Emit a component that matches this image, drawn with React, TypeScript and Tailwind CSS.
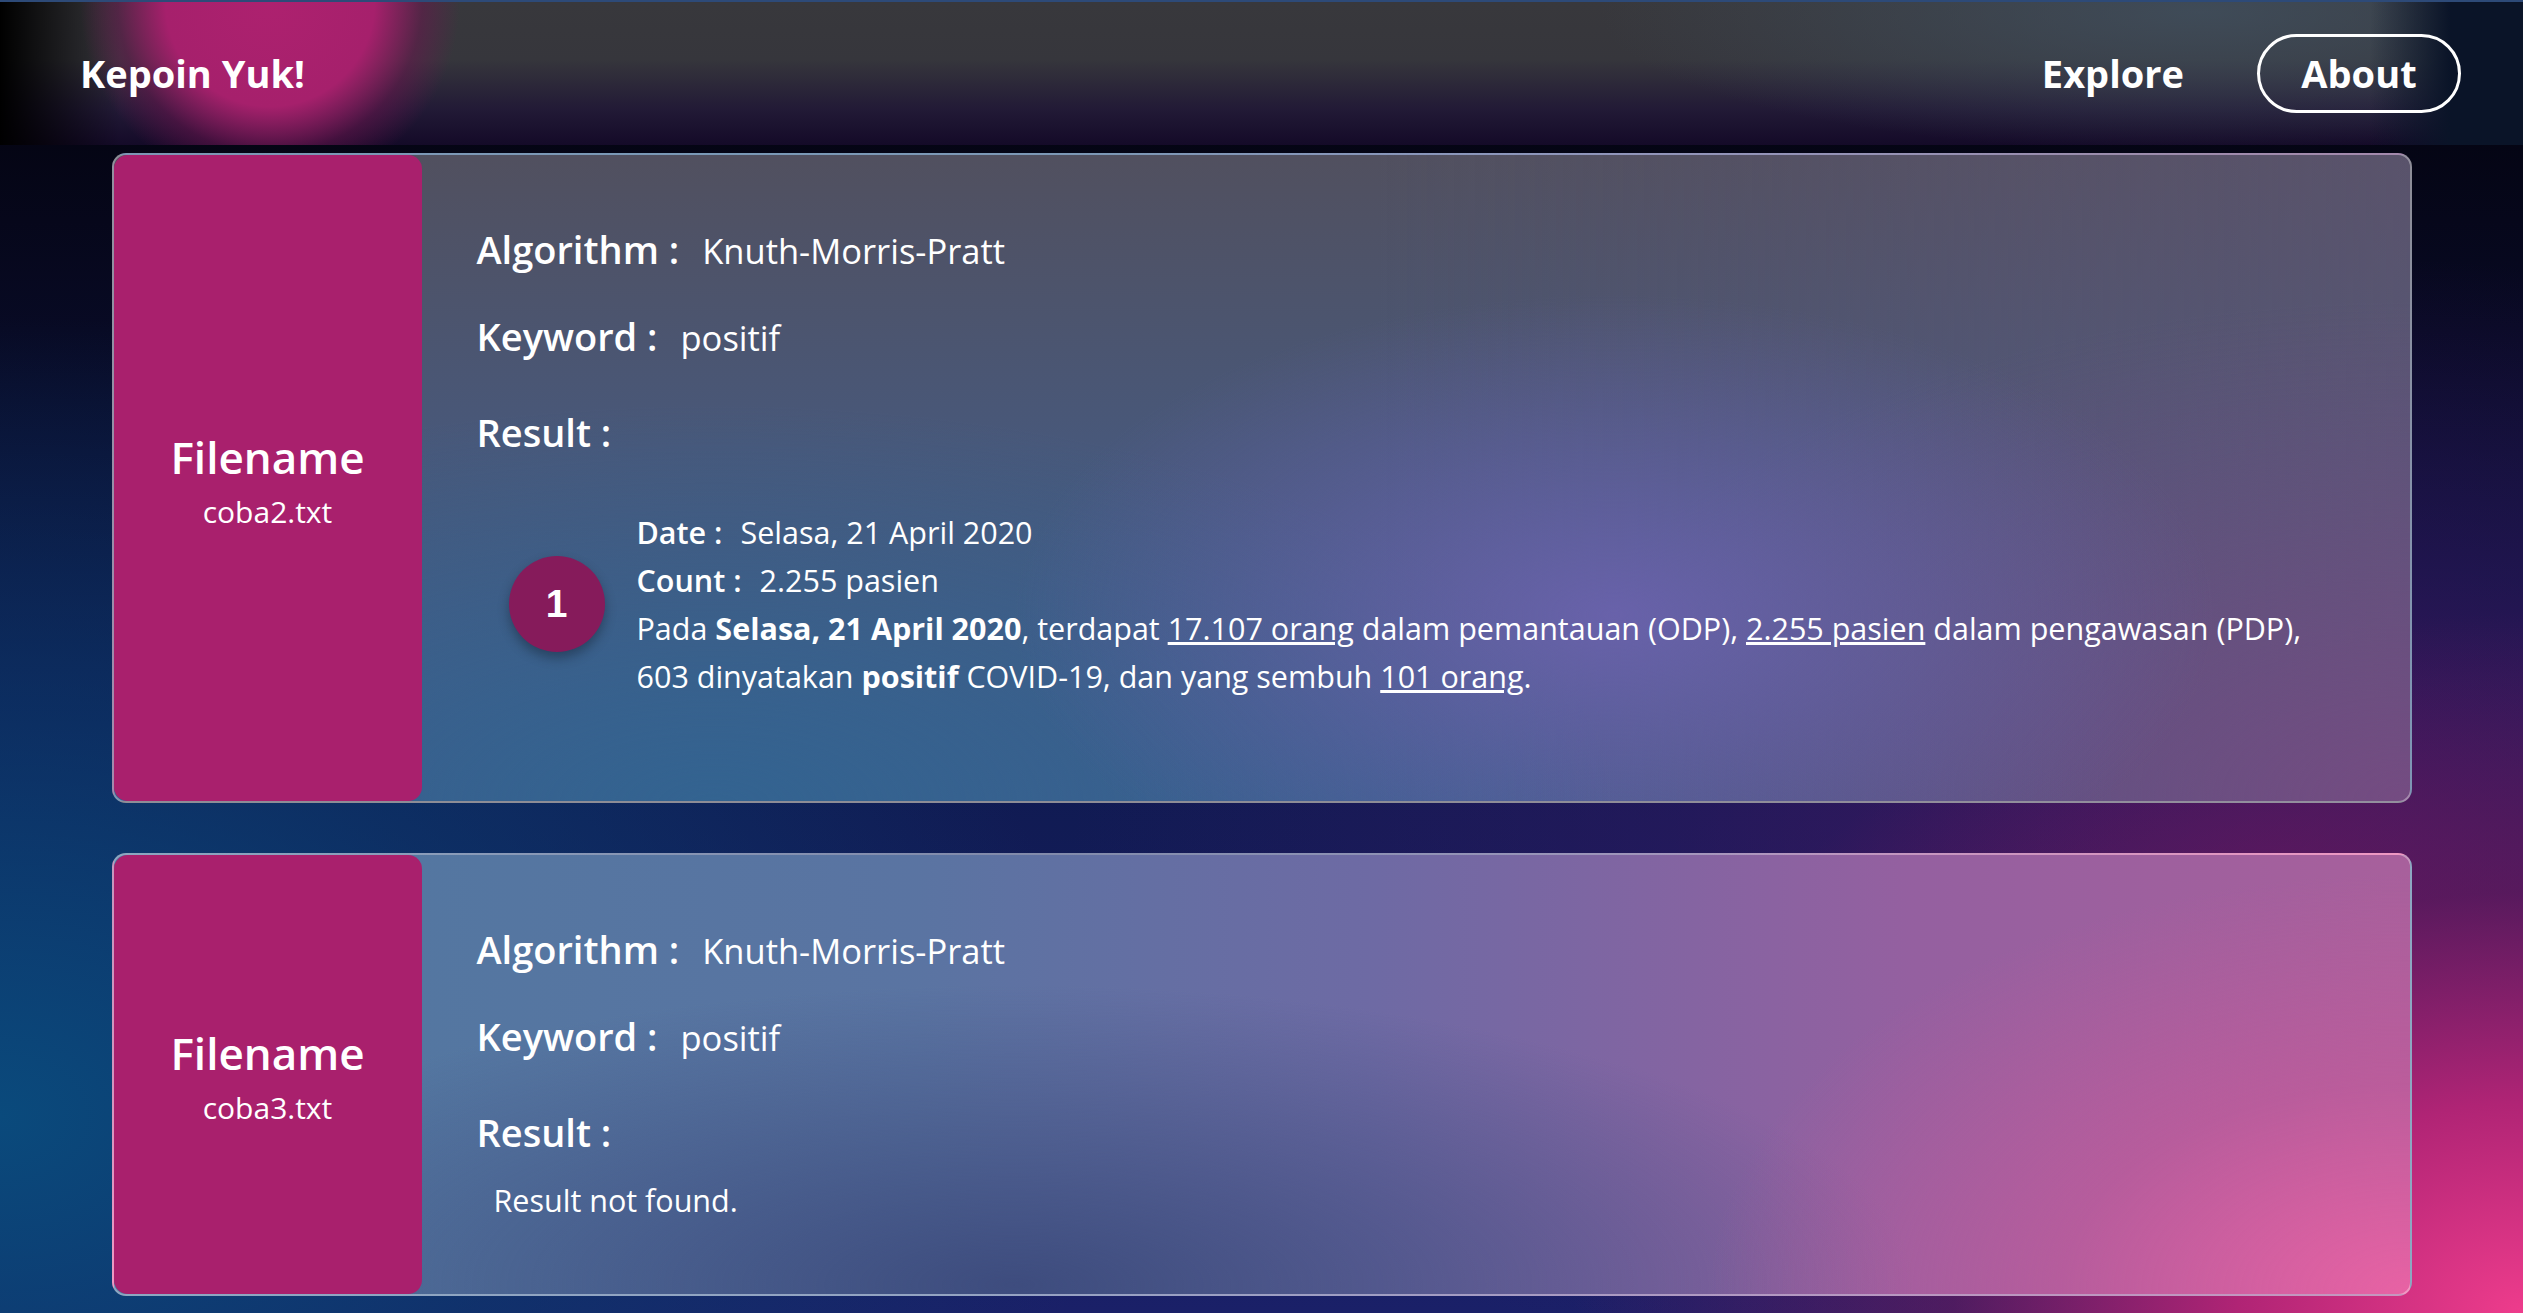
import React from "react";

function Row({ label, value, className = "" }: { label: string; value: string; className?: string }) {
  return (
    <div className={"h-[56px] leading-[56px] text-[38px] whitespace-nowrap " + className}>
      <span className="font-semibold">{label}</span>
      <span className="ml-[23px] text-[34.5px] font-normal">{value}</span>
    </div>
  );
}

function FilePanel({ name }: { name: string }) {
  return (
    <div className="w-[308px] shrink-0 rounded-[14px] bg-[#a9206d] flex flex-col items-center justify-center pt-[8px]">
      <div className="text-[44px] font-semibold leading-[53px]">Filename</div>
      <div className="text-[30px] leading-[45px] mt-[5px]">{name}</div>
    </div>
  );
}

export default function App() {
  return (
    <div className="min-h-screen w-full border-t-2 border-[#2d4a78] text-white font-['Open_Sans',sans-serif] bg-[radial-gradient(ellipse_950px_700px_at_100%_100%,#ee3c8c_0%,#b02475_30%,rgba(110,26,92,0.6)_60%,transparent_100%),radial-gradient(ellipse_1100px_800px_at_0%_85%,#0a4a7c_0%,rgba(10,60,110,0.6)_50%,transparent_100%),radial-gradient(ellipse_1200px_600px_at_90%_65%,rgba(85,22,100,0.75)_0%,rgba(60,22,100,0.4)_50%,transparent_100%),linear-gradient(to_bottom,#020108_0%,#080a24_25%,#0f1a50_55%,#1a2068_100%)]">
      <header className="h-[143px] flex items-center justify-between pl-[80px] pr-[62px] bg-[radial-gradient(ellipse_190px_190px_at_270px_0px,#ad216f_0%,#a6206c_55%,rgba(110,20,80,0.5)_80%,transparent_100%),linear-gradient(to_right,#000_0px,rgba(0,0,0,0)_120px,rgba(0,0,0,0)_2370px,#0a1428_2450px),radial-gradient(ellipse_600px_140px_at_2200px_10px,rgba(65,80,95,0.8),transparent),linear-gradient(to_bottom,#38383c_0%,#36363c_40%,#221a36_75%,#140a28_100%)]">
        <div className="text-[38px] font-bold">Kepoin Yuk!</div>
        <nav className="flex items-center gap-[73px]">
          <a className="text-[38px] font-bold">Explore</a>
          <a className="h-[79px] w-[204px] rounded-full border-[3px] border-white flex items-center justify-center text-[38px] font-bold">
            About
          </a>
        </nav>
      </header>

      <main className="w-[2300px] mx-auto pt-[8px] pb-[17px] flex flex-col gap-[50px]">
        <div className="flex rounded-[14px] border-2 border-white/35 bg-[radial-gradient(ellipse_600px_320px_at_1500px_460px,rgba(106,98,172,0.95),transparent),radial-gradient(ellipse_900px_400px_at_600px_650px,rgba(50,100,145,0.9),transparent),radial-gradient(ellipse_900px_500px_at_100%_100%,rgba(120,74,130,0.9),transparent),linear-gradient(to_right,transparent_55%,rgba(95,85,115,0.6)_100%),linear-gradient(to_bottom,#51505f_0%,#48587a_45%,#3d5d8c_100%)]">
          <FilePanel name="coba2.txt" />
          <div className="flex-1 pl-[55px] pt-[66px] pb-[70px]">
            <Row label="Algorithm :" value="Knuth-Morris-Pratt" />
            <Row label="Keyword :" value="positif" className="mt-[31px]" />
            <div className="h-[56px] leading-[56px] text-[38px] font-semibold mt-[40px]">Result :</div>
            <div className="mt-[48px] mb-[31px] flex items-center pl-[32px]">
              <div className="w-[96px] h-[96px] shrink-0 rounded-full bg-[#861b5b] shadow-[0_6px_12px_rgba(0,0,0,0.3)] flex items-center justify-center text-[39px] font-bold font-['Liberation_Sans',sans-serif]">
                1
              </div>
              <div className="ml-[32px] text-[30.5px] leading-[48px] max-w-[1700px]">
                <div>
                  <span className="font-semibold">Date :</span>
                  <span className="ml-[18px]">Selasa, 21 April 2020</span>
                </div>
                <div>
                  <span className="font-semibold">Count :</span>
                  <span className="ml-[18px]">2.255 pasien</span>
                </div>
                <p>
                  Pada <b className="font-bold">Selasa, 21 April 2020</b>, terdapat <u>17.107 orang</u> dalam pemantauan (ODP),{" "}
                  <u>2.255 pasien</u> dalam pengawasan (PDP), 603 dinyatakan <b className="font-bold">positif</b> COVID-19, dan yang
                  sembuh <u>101 orang</u>.
                </p>
              </div>
            </div>
          </div>
        </div>

        <div className="flex rounded-[14px] border-2 border-white/35 bg-[radial-gradient(ellipse_700px_420px_at_100%_100%,rgba(232,98,164,1),rgba(200,90,155,0.6)_50%,transparent),radial-gradient(ellipse_900px_300px_at_900px_430px,rgba(58,72,122,0.9),transparent),linear-gradient(to_right,#5078a0_0%,#5a74a2_35%,#6e6aa4_55%,#9460a0_78%,#a8609c_100%)]">
          <FilePanel name="coba3.txt" />
          <div className="flex-1 pl-[55px] pt-[66px] pb-[70px]">
            <Row label="Algorithm :" value="Knuth-Morris-Pratt" />
            <Row label="Keyword :" value="positif" className="mt-[31px]" />
            <div className="h-[56px] leading-[56px] text-[38px] font-semibold mt-[40px]">Result :</div>
            <div className="mt-[16px] pl-[17px] text-[30.5px] leading-[48px]">Result not found.</div>
          </div>
        </div>
      </main>
    </div>
  );
}
